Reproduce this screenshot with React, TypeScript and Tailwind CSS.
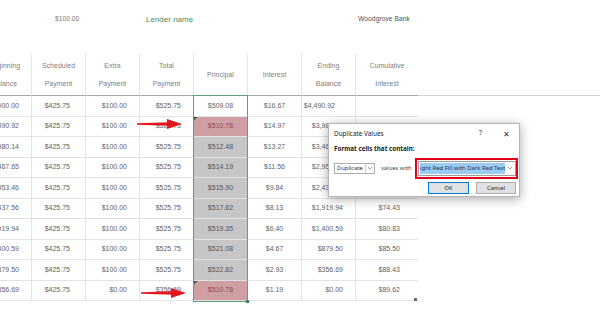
import React from "react";

type Row = string[];

const rows: Row[] = [
  ["$5,000.00", "$425.75", "$100.00", "$525.75", "$509.08", "$16.67", "$4,490.92", ""],
  ["$4,490.92", "$425.75", "$100.00", "$525.75", "$510.78", "$14.97", "$3,980.14", "$31.64"],
  ["$3,980.14", "$425.75", "$100.00", "$525.75", "$512.48", "$13.27", "$3,467.65", "$44.91"],
  ["$3,467.65", "$425.75", "$100.00", "$525.75", "$514.19", "$11.56", "$2,953.46", "$56.47"],
  ["$2,953.46", "$425.75", "$100.00", "$525.75", "$515.90", "$9.84", "$2,437.56", "$66.31"],
  ["$2,437.56", "$425.75", "$100.00", "$525.75", "$517.62", "$8.13", "$1,919.94", "$74.43"],
  ["$1,919.94", "$425.75", "$100.00", "$525.75", "$519.35", "$6.40", "$1,400.59", "$80.83"],
  ["$1,400.59", "$425.75", "$100.00", "$525.75", "$521.08", "$4.67", "$879.50", "$85.50"],
  ["$879.50", "$425.75", "$100.00", "$525.75", "$522.82", "$2.93", "$356.69", "$88.43"],
  ["$356.69", "$425.75", "$0.00", "$356.69", "$510.78", "$1.19", "$0.00", "$89.62"],
];

const headers: string[][] = [
  ["Beginning", "Balance"],
  ["Scheduled", "Payment"],
  ["Extra", "Payment"],
  ["Total", "Payment"],
  ["Principal"],
  ["Interest"],
  ["Ending", "Balance"],
  ["Cumulative", "Interest"],
];

const cellAlign = [
  "w-[54px] justify-end pr-[12px] border-r",
  "w-[54px] justify-end pr-[15px] border-r",
  "w-[54px] justify-end pr-[12px] border-r",
  "w-[54px] justify-end pr-[12px] border-r",
  "w-[54px] justify-center border-r",
  "w-[54px] justify-center border-r",
  "w-[54px] justify-end pr-[12px] border-r",
  "w-[62px] justify-end pr-[18px]",
];

const headWidths = [
  "w-[54px] border-r",
  "w-[54px] border-r",
  "w-[54px] border-r",
  "w-[54px] border-r",
  "w-[54px] border-r",
  "w-[54px] border-r",
  "w-[54px] border-r",
  "w-[62px]",
];

function Arrow({ className }: { className: string }) {
  return (
    <svg className={className} viewBox="0 0 46 12" width="46" height="12">
      <polygon points="0,5.3 32,4.3 32,7.7 0,6.7" fill="#e3161b" />
      <polygon points="30,1 45,6 30,11" fill="#e3161b" />
    </svg>
  );
}

function Chevron() {
  return (
    <svg width="6" height="4" viewBox="0 0 6 4">
      <polyline points="0.8,0.8 3,3 5.2,0.8" fill="none" stroke="#8a8a8a" strokeWidth="0.8" />
    </svg>
  );
}

export default function App() {
  return (
    <div className="relative w-[600px] h-[335px] overflow-hidden bg-white font-['Liberation_Sans',Arial,sans-serif]">
      {/* top info line */}
      <div className="flex items-center h-[37px] pt-[1px]">
        <div className="w-[146px] pl-[55px] text-[6.7px] text-[#7a7a7a]">$100.00</div>
        <div className="w-[212px] text-[8px] text-[#4f8a55] pt-[2px]">Lender name</div>
        <div className="text-[6.8px] text-[#555]">Woodgrove Bank</div>
      </div>
      <div className="h-[16px]" />

      {/* table */}
      <div className="flex flex-col ml-[-22px] w-[622px] text-[7px]">
        <div className="flex h-[43px]">
          {headers.map((h, i) => (
            <div
              key={i}
              className={`${headWidths[i]} border-[#e6e6e6] border-b border-b-[#a8a8a8] flex flex-col items-center justify-center text-[#808080] leading-[18px] pt-[1px]`}
            >
              {h.map((t) => (
                <span key={t} className="whitespace-nowrap">{t}</span>
              ))}
            </div>
          ))}
          <div className="flex-1 border-b border-[#d2d2d2]" />
        </div>
        {rows.map((r, ri) => (
          <div key={ri} className="flex h-[20.5px]">
            {r.map((v, ci) => {
              const isPrin = ci === 4;
              const dup = isPrin && (ri === 1 || ri === 9);
              let bg = "";
              let color = "text-[#636363]";
              if (isPrin && ri > 0) {
                bg = dup ? "bg-[#cf9fa3]" : "bg-[#c6c6c6]";
                color = dup ? "text-[#8e4a4e]" : "text-[#555]";
              }
              const extra = ci === 6 && ri === 0 ? "!pr-[20px]" : "";
              return (
                <div
                  key={ci}
                  className={`${cellAlign[ci]} ${bg} ${color} ${extra} flex items-center border-b border-[#e3e3e3] whitespace-nowrap overflow-hidden`}
                >
                  {v}
                </div>
              );
            })}
          </div>
        ))}
      </div>

      {/* selection outline on Principal column */}
      <div className="absolute left-[193px] top-[95px] w-[55px] h-[207px] border border-[#5f9f7c]" />
      {/* duplicate markers */}
      <svg className="absolute left-[194px] top-[117px]" width="4" height="4" viewBox="0 0 4 4">
        <polygon points="0,0 3.5,0 0,3.5" fill="#2e5e3e" />
      </svg>
      <svg className="absolute left-[194px] top-[281px]" width="4" height="4" viewBox="0 0 4 4">
        <polygon points="0,0 3.5,0 0,3.5" fill="#2e5e3e" />
      </svg>
      {/* fill handle */}
      <div className="absolute left-[246px] top-[300px] w-[3px] h-[3px] bg-[#3f7f5a]" />
      <div className="absolute left-[414px] top-[298px] w-[3px] h-[3px] bg-[#6a6a6a]" />

      {/* arrows */}
      <Arrow className="absolute left-[137px] top-[118px]" />
      <Arrow className="absolute left-[141px] top-[287px]" />

      {/* dialog */}
      <div className="absolute left-[328px] top-[123px] w-[192px] h-[74px] bg-white border border-[#b5b5b5] shadow-[0_2px_10px_rgba(0,0,0,0.35)] font-['Noto_Sans',sans-serif] flex flex-col">
        <div className="flex items-center h-[19px] pl-[5px] text-[6.4px] text-[#222]">
          <span className="whitespace-nowrap">Duplicate Values</span>
          <span className="ml-auto mr-[21px] text-[7px] text-[#333]">?</span>
          <span className="mr-[9px] text-[8px] leading-none text-[#333]">✕</span>
        </div>
        <div className="h-[12px] flex items-center pl-[5px] text-[6.3px] font-bold text-[#222] whitespace-nowrap">
          Format cells that contain:
        </div>
        <div className="flex items-center h-[22px] mt-[2px] pl-[5px]">
          <div className="flex w-[41px] h-[11px] border border-[#adadad] bg-white">
            <span className="flex-1 pl-[2px] text-[5.8px] leading-[9px] text-[#333]">Duplicate</span>
            <span className="w-[9px] border-l border-[#d0d0d0] flex items-center justify-center">
              <Chevron />
            </span>
          </div>
          <span className="ml-[6px] w-[28px] text-[5.8px] text-[#444] whitespace-nowrap">values with</span>
          <div className="ml-[6px] w-[103px] h-[21px] border-[2.5px] border-[#e3001b] p-[1px] flex">
            <div className="flex flex-1 border border-[#9a9a9a] bg-white p-[1px]">
              <div className="flex-1 bg-[#9ccbf2] overflow-hidden flex items-center">
                <span className="ml-[-3px] text-[5.9px] text-[#1c3150] whitespace-nowrap">
                  Light Red Fill with Dark Red Text
                </span>
              </div>
              <span className="w-[9px] flex items-center justify-center">
                <Chevron />
              </span>
            </div>
          </div>
        </div>
        <div className="flex mt-[3px] pl-[99px] gap-[7px]">
          <div className="w-[41px] h-[12px] border border-[#0078d7] bg-[#e1e1e1] flex items-center justify-center text-[5.8px] text-[#222]">
            OK
          </div>
          <div className="w-[40px] h-[12px] border border-[#adadad] bg-[#e1e1e1] flex items-center justify-center text-[5.8px] text-[#222]">
            Cancel
          </div>
        </div>
      </div>
    </div>
  );
}
